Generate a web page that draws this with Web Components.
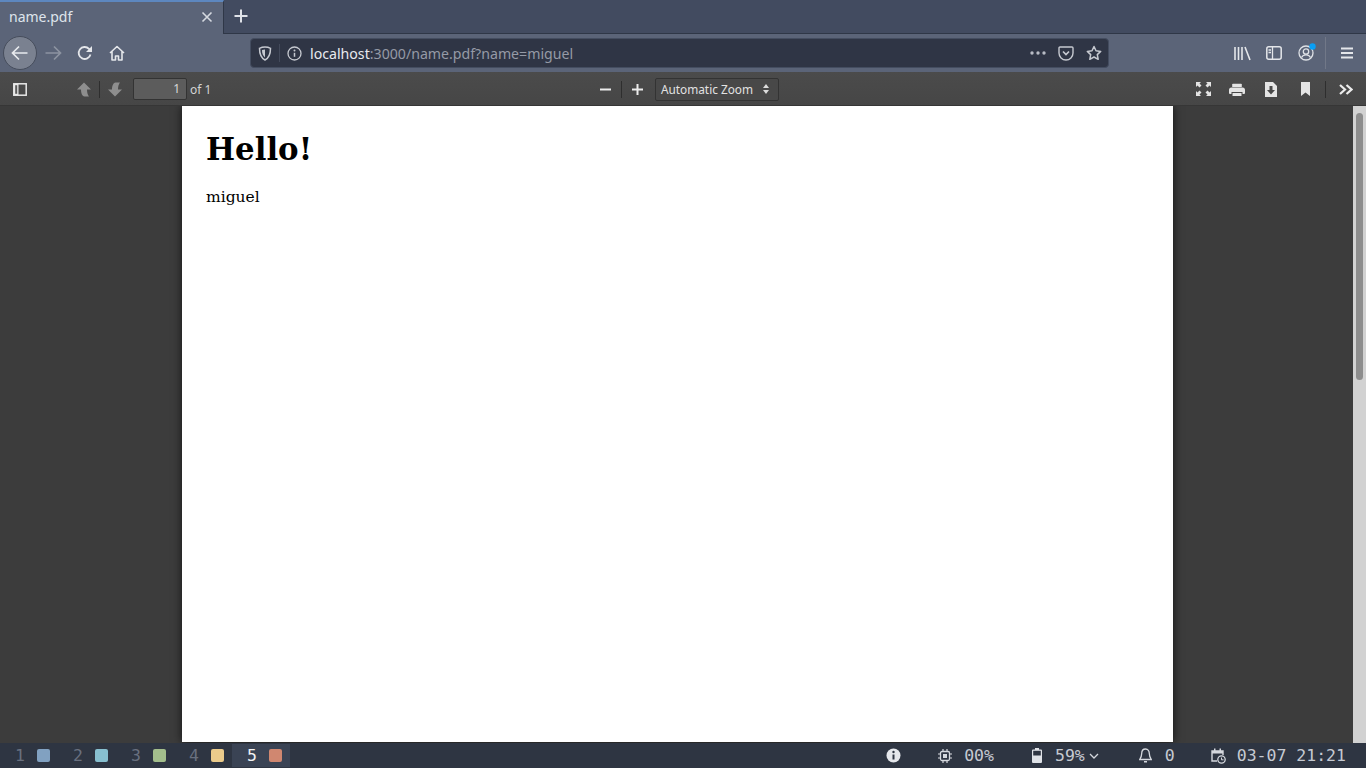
<!DOCTYPE html>
<html lang="en">
<head>
<meta charset="utf-8">
<title>name.pdf</title>
<style>
  html, body { margin: 0; height: 100%; overflow: hidden; background: #3a3a3a; }
  svg { display: block; }
</style>
</head>
<body>
<app-frame>
  <tab-strip>
    <browser-tab title-text="name.pdf"></browser-tab>
  </tab-strip>
  <nav-bar></nav-bar>
  <pdf-toolbar></pdf-toolbar>
  <pdf-viewer>
    <pdf-page>
      <h1 slot="heading">Hello!</h1>
      <span slot="body">miguel</span>
    </pdf-page>
  </pdf-viewer>
  <status-bar></status-bar>
</app-frame>

<script>
function makeTemplate(html) {
  const t = document.createElement("template")
  t.innerHTML = html
  return t
}

class BaseElement extends HTMLElement {
  constructor() {
    super()
    const shadow = this.attachShadow({ mode: "open" })
    shadow.append(this.constructor.template.content.cloneNode(true))
  }
}

class AppFrame extends BaseElement {
  static template = makeTemplate(`
    <style>
      :host { display: flex; flex-direction: column; width: 1366px; height: 768px; overflow: hidden; }
    </style>
    <slot></slot>
  `)
}

class TabStrip extends BaseElement {
  static template = makeTemplate(`
    <style>
      :host { display: flex; height: 33px; background: #424b60; flex: none; border-bottom: 1px solid #2f3747; box-sizing: content-box; }
      #plus { width: 32px; display: flex; align-items: center; justify-content: center; margin-left: 1px; margin-top: -1px; }
    </style>
    <slot></slot>
    <div id="plus">
      <svg width="16" height="16" viewBox="0 0 16 16"><path d="M8 1.500v13M1.500 8h13" stroke="#dfe2e8" stroke-width="2" fill="none"/></svg>
    </div>
  `)
}

class BrowserTab extends BaseElement {
  static template = makeTemplate(`
    <style>
      :host { display: flex; width: 224px; height: 34px; box-sizing: border-box; background: #5b6478; border-top: 2px solid #5d87bf; border-right: 1px solid #2f3747; align-items: center; padding: 0 10px 0 9px; font: 14px "Noto Sans", sans-serif; color: #dfe4ec; margin-bottom: -1px; position: relative; }
      #title { flex: 1; margin-top: -3px; }
      svg { margin-top: -2px; }
    </style>
    <span id="title"></span>
    <svg width="12" height="12" viewBox="0 0 12 12"><path d="M1.500 1.500l9 9M10.500 1.500l-9 9" stroke="#d5d9e0" stroke-width="1.600" fill="none"/></svg>
  `)
  connectedCallback() {
    this.shadowRoot.getElementById("title").textContent = this.getAttribute("title-text")
  }
}

class ToolButton extends BaseElement {
  static template = makeTemplate(`
    <style>
      :host { display: flex; width: var(--w, 32px); height: 32px; align-items: center; justify-content: center; flex: none; }
    </style>
    <slot></slot>
  `)
}

class UrlBar extends BaseElement {
  static template = makeTemplate(`
    <style>
      :host { display: flex; align-items: center; width: 859px; height: 30px; box-sizing: border-box; background: #2f3545; border: 1px solid #444d60; border-radius: 4px; font: 14.150px "Noto Sans", sans-serif; color: #959aa6; flex: none; }
      #shield { width: 28px; display: flex; justify-content: center; }
      #sep { width: 1px; height: 18px; background: #434a5b; }
      #info { width: 29px; display: flex; justify-content: center; }
      #url { flex: 1; white-space: nowrap; margin-left: 1px; }
      b { font-weight: 400; color: #e8eaee; }
      #end { display: flex; align-items: center; }
      .a { width: 28px; display: flex; justify-content: center; }
    </style>
    <div id="shield">
      <svg width="14" height="15" viewBox="0 0 14 15"><path d="M7 1C5 1 3 1.500 1.500 2.300 1.500 8 3 12 7 14c4-2 5.500-6 5.500-11.700C11 1.500 9 1 7 1z" fill="none" stroke="#c6c9d0" stroke-width="1.500"/><path d="M7 3.500c-1 0-2 .2-3 .6C4 7.500 5 10 7 11.500z" fill="#c6c9d0"/></svg>
    </div>
    <div id="sep"></div>
    <div id="info">
      <svg width="15" height="15" viewBox="0 0 15 15"><circle cx="7.500" cy="7.500" r="6.500" fill="none" stroke="#c6c9d0" stroke-width="1.300"/><path d="M7.500 6.800v4" stroke="#c6c9d0" stroke-width="1.500"/><circle cx="7.500" cy="4.500" r="1" fill="#c6c9d0"/></svg>
    </div>
    <span id="url"><b>localhost</b>:3000/name.pdf?name=miguel</span>
    <div id="end">
      <div class="a"><svg width="18" height="4" viewBox="0 0 18 4"><circle cx="3" cy="2" r="1.700" fill="#b8bcc5"/><circle cx="9" cy="2" r="1.700" fill="#b8bcc5"/><circle cx="15" cy="2" r="1.700" fill="#b8bcc5"/></svg></div>
      <div class="a"><svg width="16" height="15" viewBox="0 0 16 15"><path d="M2 1h12a1 1 0 0 1 1 1v5a7 7 0 0 1-14 0V2a1 1 0 0 1 1-1z" fill="none" stroke="#c6c9d0" stroke-width="1.400"/><path d="M5 5.500l3 3 3-3" fill="none" stroke="#c6c9d0" stroke-width="1.700"/></svg></div>
      <div class="a"><svg width="16" height="16" viewBox="0 0 16 16"><path d="M8 1.500l2 4.300 4.700.6-3.400 3.200.9 4.700L8 12l-4.200 2.300.9-4.700L1.300 6.400 6 5.800z" fill="none" stroke="#c6c9d0" stroke-width="1.500" stroke-linejoin="round"/></svg></div>
    </div>
  `)
}

class NavBar extends BaseElement {
  static template = makeTemplate(`
    <style>
      :host { display: flex; align-items: center; height: 38px; background: #5b6478; padding-left: 3px; flex: none; }
      #back { width: 34px; height: 34px; box-sizing: border-box; background: #7a8190; border: 1px solid #464d5c; border-radius: 50%; display: flex; align-items: center; justify-content: center; }
      .gap { width: 1px; height: 32px; background: #717888; margin: 0 6px 0 3px; }
    </style>
    <div id="back">
      <svg width="18" height="16" viewBox="0 0 18 16"><path d="M1.500 8h15M8 1.500L1.500 8 8 14.500" fill="none" stroke="#e8eaee" stroke-width="1.700"/></svg>
    </div>
    <tool-button>
      <svg width="18" height="16" viewBox="0 0 18 16"><path d="M1.500 8h15M10 1.500L16.500 8 10 14.500" fill="none" stroke="#8d93a1" stroke-width="1.700"/></svg>
    </tool-button>
    <tool-button>
      <svg width="16" height="16" viewBox="0 0 16 16"><path d="M13.500 9.500A6 6 0 1 1 12 3.800L14 6" fill="none" stroke="#e4e6ea" stroke-width="1.800"/><path d="M15 1v6H9z" fill="#e4e6ea"/></svg>
    </tool-button>
    <tool-button>
      <svg width="16" height="16" viewBox="0 0 16 16"><path d="M1 8l7-6.500L15 8M3 6.500V15h3.500v-4h3v4H13V6.500" fill="none" stroke="#e4e6ea" stroke-width="1.600" stroke-linejoin="round"/></svg>
    </tool-button>
    <url-bar style="margin-left:117px"></url-bar>
    <tool-button style="margin-left:117px">
      <svg width="17" height="15" viewBox="0 0 17 15"><path d="M1 1v13M4.500 1v13M8 1v13M11 1l5 13" fill="none" stroke="#e4e6ea" stroke-width="1.600"/></svg>
    </tool-button>
    <tool-button>
      <svg width="16" height="14" viewBox="0 0 16 14"><rect x=".8" y=".8" width="14.400" height="12.400" rx="2" fill="none" stroke="#e4e6ea" stroke-width="1.500"/><path d="M6.500 1v12M2.500 4h2.500M2.500 6.500h2.500" stroke="#e4e6ea" stroke-width="1.300"/></svg>
    </tool-button>
    <tool-button style="position:relative">
      <svg width="16" height="16" viewBox="0 0 16 16"><circle cx="8" cy="8" r="7" fill="none" stroke="#dfe2e7" stroke-width="1.300"/><circle cx="8" cy="6.500" r="2.700" fill="none" stroke="#dfe2e7" stroke-width="1.300"/><path d="M3.500 12.500c1-2 2.500-2.700 4.500-2.700s3.500.7 4.500 2.700" fill="none" stroke="#dfe2e7" stroke-width="1.300"/></svg>
      <svg width="7" height="7" viewBox="0 0 7 7" style="position:absolute;left:19px;top:6px"><circle cx="3.500" cy="3.500" r="3.200" fill="#0a9ff5"/></svg>
    </tool-button>
    <div class="gap"></div>
    <tool-button style="--w:30px">
      <svg width="14" height="12" viewBox="0 0 14 12"><path d="M1 1.500h12M1 6h12M1 10.500h12" stroke="#e4e6ea" stroke-width="1.800"/></svg>
    </tool-button>
  `)
}

class PdfToolbar extends BaseElement {
  static template = makeTemplate(`
    <style>
      :host { display: flex; align-items: center; height: 34px; background: linear-gradient(#4b4b4b, #464646); box-shadow: inset 0 -1px 0 #363636; padding-left: 4px; font: 11.800px "Noto Sans", sans-serif; color: #d4d4d4; flex: none; --w: 34px; }
      .sep { width: 1px; height: 17px; background: #2e2e2e; flex: none; }
      #page { width: 54px; height: 22px; box-sizing: border-box; background: #5c5c5c; border: 1px solid #333; border-radius: 2px; text-align: right; padding-right: 6px; line-height: 20px; color: #d8d8d8; margin-left: 3px; flex: none; font-size: 12px; }
      #of { margin-left: 3px; width: 399px; flex: none; font-size: 12px; }
      #zoom { width: 124px; height: 23px; box-sizing: border-box; background: #484848; border: 1px solid #333; border-radius: 2px; display: flex; align-items: center; justify-content: space-between; padding: 0 9px 0 5px; color: #e2e2e2; margin-left: 2px; flex: none; }
      #right { margin-left: 407px; display: flex; align-items: center; }
    </style>
    <tool-button style="--w:32px">
      <svg width="14" height="13" viewBox="0 0 14 13"><rect x=".8" y=".8" width="12.400" height="11.400" fill="none" stroke="#e8e8e8" stroke-width="1.500"/><rect x="1" y="1" width="4.500" height="11" fill="#e8e8e8"/><rect x="2.200" y="2.200" width="2" height="8.600" fill="#5a5a5a"/></svg>
    </tool-button>
    <div style="width:31px;flex:none"></div>
    <tool-button style="--w:33px">
      <svg width="16" height="15" viewBox="0 0 16 15"><path d="M8 .5L15 7.500H11C11 10 11.500 12.500 13 14.500H8.500C6 14 5 11 5 7.500H1z" fill="#8e8e8e"/></svg>
    </tool-button>
    <div class="sep" style="margin-left:-1px"></div>
    <tool-button style="--w:30px">
      <svg width="16" height="15" viewBox="0 0 16 15"><path d="M8 14.500L15 7.500H11C11 5 11.500 2.500 13 .5H8.500C6 1 5 4 5 7.500H1z" fill="#8e8e8e"/></svg>
    </tool-button>
    <div id="page">1</div>
    <span id="of">of 1</span>
    <tool-button style="--w:32px">
      <svg width="11" height="3" viewBox="0 0 11 3"><path d="M0 1.500h11" stroke="#ececec" stroke-width="2"/></svg>
    </tool-button>
    <div class="sep"></div>
    <tool-button style="--w:31px">
      <svg width="11" height="11" viewBox="0 0 11 11"><path d="M0 5.500h11M5.500 0v11" stroke="#ececec" stroke-width="2"/></svg>
    </tool-button>
    <div id="zoom">
      <span>Automatic Zoom</span>
      <svg width="6" height="10" viewBox="0 0 6 10"><path d="M3 0l3 4H0zM3 10L0 6h6z" fill="#dcdcdc"/></svg>
    </div>
    <div id="right">
      <tool-button style="--w:34px">
        <svg width="15" height="14" viewBox="0 0 15 14"><path d="M0 0h5L3.500 1.500 5.500 3.500 3.500 5.500 1.500 3.500 0 5zM15 0v5L13.500 3.500 11.500 5.500 9.500 3.500 11.500 1.500 10 0zM0 14V9L1.500 10.500 3.500 8.500 5.500 10.500 3.500 12.500 5 14zM15 14h-5L11.500 12.500 9.500 10.500 11.500 8.500 13.500 10.500 15 9z" fill="#e4e4e4"/></svg>
      </tool-button>
      <tool-button style="--w:34px">
        <svg width="16" height="13" viewBox="0 0 16 13"><path d="M4 .7h8a.8.8 0 0 1 .8.8V4H3.200V1.500A.8.8 0 0 1 4 .7z" fill="#e4e4e4"/><path d="M2.500 4.500h11A2.500 2.500 0 0 1 16 7v3a1 1 0 0 1-1 1h-1.500V9h-11v2H1a1 1 0 0 1-1-1V7a2.500 2.500 0 0 1 2.500-2.500z" fill="#e4e4e4"/><path d="M3.500 10h9v3h-9z" fill="#e4e4e4"/></svg>
      </tool-button>
      <tool-button style="--w:34px">
        <svg width="12" height="15" viewBox="0 0 12 15"><path d="M0 0h8l4 4v11H0z" fill="#e4e4e4"/><path d="M4.500 4h3v4H10l-4 4.500L2 8h2.500z" fill="#484848"/></svg>
      </tool-button>
      <tool-button style="--w:34px">
        <svg width="9" height="14" viewBox="0 0 9 14"><path d="M0 0h9v14L4.500 10.500 0 14z" fill="#e4e4e4"/></svg>
      </tool-button>
      <div class="sep" style="margin-left:3px"></div>
      <tool-button style="--w:39px">
        <svg width="14" height="11" viewBox="0 0 14 11"><path d="M1 1l5 4.500L1 10M7.500 1l5 4.500-5 4.500" fill="none" stroke="#ececec" stroke-width="2.200"/></svg>
      </tool-button>
    </div>
  `)
}

class PdfViewer extends BaseElement {
  static template = makeTemplate(`
    <style>
      :host { display: flex; flex: 1; min-height: 0; background: #3c3c3c; overflow: hidden; position: relative; }
      #main { flex: 1; padding-left: 182px; min-width: 0; }
      #bar { width: 13px; flex: none; background: #d2d2d2; padding: 7px 3px 0; box-sizing: border-box; }
      #thumb { height: 267px; background: #8d8d8d; border-radius: 4px; }
    </style>
    <div id="main"><slot></slot></div>
    <div id="bar"><div id="thumb"></div></div>
  `)
}

class PdfPage extends BaseElement {
  static template = makeTemplate(`
    <style>
      :host { display: block; width: 991px; height: calc(100% - 1px); background: #fff; box-shadow: 0 0 9px rgba(0,0,0,.7); box-sizing: border-box; padding: 24px; font-family: "DejaVu Serif", serif; color: #000; }
      ::slotted(h1) { margin: 0; font: bold 30.800px/38px "DejaVu Serif", serif; }
      ::slotted(span) { display: block; margin-top: 19px; font: 15.500px/20px "DejaVu Serif", serif; }
    </style>
    <slot name="heading"></slot>
    <slot name="body"></slot>
  `)
}

class WsTag extends BaseElement {
  static template = makeTemplate(`
    <style>
      :host { display: flex; align-items: center; width: 58px; height: 23px; box-sizing: border-box; padding-left: 15px; color: #69707f; }
      :host([active]) { background: #3a4354; color: #f2f3f5; }
      #n { width: 22px; font: 16.500px "DejaVu Sans Mono", monospace; }
      #c { width: 13px; height: 13px; border-radius: 2px; background: var(--c); }
    </style>
    <span id="n"></span><span id="c"></span>
  `)
  connectedCallback() {
    this.shadowRoot.getElementById("n").textContent = this.getAttribute("n")
    this.style.setProperty("--c", this.getAttribute("c"))
  }
}

class StatusItem extends BaseElement {
  static template = makeTemplate(`
    <style>
      :host { display: flex; align-items: center; font: 16.500px "DejaVu Sans Mono", monospace; color: #c6cad2; white-space: nowrap; }
    </style>
    <slot></slot>
  `)
}

class StatusBar extends BaseElement {
  static template = makeTemplate(`
    <style>
      :host { display: flex; align-items: center; height: 25px; background: #2e3542; flex: none; position: relative; z-index: 1; }
      #tags { display: flex; align-items: center; }
      #right { margin-left: auto; display: flex; align-items: center; padding-right: 20px; }
    </style>
    <div id="tags">
      <ws-tag n="1" c="#81a1c1"></ws-tag>
      <ws-tag n="2" c="#88c0d0"></ws-tag>
      <ws-tag n="3" c="#a3be8c"></ws-tag>
      <ws-tag n="4" c="#ebcb8b"></ws-tag>
      <ws-tag n="5" c="#d08770" active></ws-tag>
    </div>
    <div id="right">
      <status-item>
        <svg width="15" height="15" viewBox="0 0 15 15"><circle cx="7.500" cy="7.500" r="7" fill="#e6e8ec"/><path d="M7.500 6.500v5" stroke="#2e3542" stroke-width="2"/><circle cx="7.500" cy="4" r="1.200" fill="#2e3542"/></svg>
      </status-item>
      <status-item style="margin-left:37px">
        <svg width="14" height="14" viewBox="0 0 14 14" style="margin-right:12px"><rect x="2.500" y="2.500" width="9" height="9" rx="1.500" fill="none" stroke="#d5d8de" stroke-width="1.300"/><rect x="5" y="5" width="4" height="4" fill="#d5d8de"/><path d="M0 5h2M0 9h2M12 5h2M12 9h2M5 0v2M9 0v2M5 12v2M9 12v2" stroke="#d5d8de" stroke-width="1.200"/></svg>
        00%
      </status-item>
      <status-item style="margin-left:38px">
        <svg width="10" height="15" viewBox="0 0 10 15" style="margin-right:13px"><path d="M3 0h4v1.500h2a1 1 0 0 1 1 1V14a1 1 0 0 1-1 1H1a1 1 0 0 1-1-1V2.500a1 1 0 0 1 1-1h2z" fill="#dfe2e7"/><rect x="1.200" y="2.800" width="7.600" height="4.700" fill="#2e3542"/></svg>
        59%
        <svg width="10" height="6" viewBox="0 0 10 6" style="margin-left:4px"><path d="M1 1l4 4 4-4" fill="none" stroke="#d5d8de" stroke-width="1.300"/></svg>
      </status-item>
      <status-item style="margin-left:40px">
        <svg width="13" height="15" viewBox="0 0 13 15" style="margin-right:13px"><path d="M6.500 1C4 1 2.700 3 2.700 5.500c0 3-1 4.500-2 6h11.600c-1-1.500-2-3-2-6C10.300 3 9 1 6.500 1z" fill="none" stroke="#d5d8de" stroke-width="1.300"/><path d="M5 13h3v1.500H5z" fill="#d5d8de"/></svg>
        0
      </status-item>
      <status-item style="margin-left:36px">
        <svg width="15" height="16" viewBox="0 0 15 16" style="margin-right:11px"><path d="M6 13H1V3h11v4" fill="none" stroke="#d5d8de" stroke-width="1.400"/><path d="M1 3h11v2.500H1zM3 .5h1.500v3H3zM8.500 .5H10v3H8.500z" fill="#d5d8de"/><circle cx="10.500" cy="11.500" r="3.700" fill="none" stroke="#d5d8de" stroke-width="1.300"/><path d="M10.500 9.500v2.300h2" fill="none" stroke="#d5d8de" stroke-width="1"/></svg>
        03-07 21:21
      </status-item>
    </div>
  `)
}

customElements.define("app-frame", AppFrame)
customElements.define("tab-strip", TabStrip)
customElements.define("browser-tab", BrowserTab)
customElements.define("tool-button", ToolButton)
customElements.define("url-bar", UrlBar)
customElements.define("nav-bar", NavBar)
customElements.define("pdf-toolbar", PdfToolbar)
customElements.define("pdf-viewer", PdfViewer)
customElements.define("pdf-page", PdfPage)
customElements.define("ws-tag", WsTag)
customElements.define("status-item", StatusItem)
customElements.define("status-bar", StatusBar)
</script>
</body>
</html>
